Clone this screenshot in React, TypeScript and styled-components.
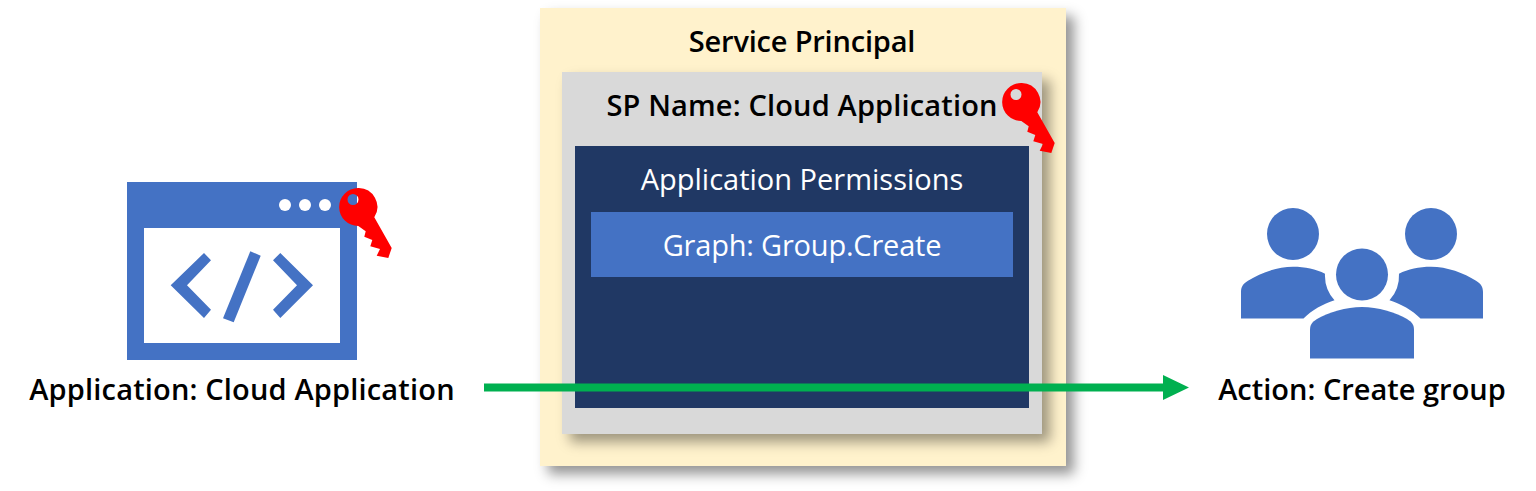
import React from "react";
import styled, { createGlobalStyle } from "styled-components";

const Global = createGlobalStyle`
  html, body { margin: 0; padding: 0; background: #fff; }
`;

const Page = styled.div`
  position: relative;
  width: 1536px;
  height: 491px;
  overflow: hidden;
  display: flex;
  align-items: flex-start;
  padding-top: 8px;
  box-sizing: border-box;
  font-family: "Open Sans", "Noto Sans", sans-serif;
  color: #000;
`;

const SideColumn = styled.div<{ $left: number; $top: number; $width: number }>`
  margin-left: ${(p) => p.$left}px;
  margin-top: ${(p) => p.$top}px;
  width: ${(p) => p.$width}px;
  flex: none;
  display: flex;
  flex-direction: column;
  align-items: center;
`;

const SideLabel = styled.div<{ $tracking: number }>`
  font-size: 29px;
  font-weight: 600;
  line-height: 36px;
  white-space: nowrap;
  letter-spacing: ${(p) => p.$tracking}px;
`;

const IconWrap = styled.div<{ $height: number }>`
  height: ${(p) => p.$height}px;
  margin-bottom: 11px;
`;

const Panel = styled.div<{ $bg: string; $pad: string; $width: number; $height: number }>`
  position: relative;
  flex: none;
  box-sizing: border-box;
  width: ${(p) => p.$width}px;
  height: ${(p) => p.$height}px;
  padding: ${(p) => p.$pad};
  background: ${(p) => p.$bg};
  display: flex;
  flex-direction: column;
  align-items: stretch;
`;

const OuterPanel = styled(Panel)`
  margin-left: 86px;
  box-shadow: 8px 8px 12px rgba(0, 0, 0, 0.42);
`;

const MiddlePanel = styled(Panel)`
  box-shadow: 8px 8px 12px rgba(0, 0, 0, 0.38);
`;

const Title = styled.div<{ $height: number; $tracking: number; $drop: number }>`
  height: ${(p) => p.$height}px;
  box-sizing: border-box;
  padding-bottom: ${(p) => p.$drop}px;
  display: flex;
  align-items: center;
  justify-content: center;
  flex: none;
  font-size: 29px;
  font-weight: 600;
  letter-spacing: ${(p) => p.$tracking}px;
  white-space: nowrap;
`;

const PermissionsTitle = styled.div`
  height: 66px;
  box-sizing: border-box;
  padding-bottom: 2px;
  flex: none;
  display: flex;
  align-items: center;
  justify-content: center;
  color: #fff;
  font-size: 29px;
  font-weight: 400;
  white-space: nowrap;
`;

const PermissionBar = styled.div`
  height: 65px;
  flex: none;
  background: #4472c4;
  color: #fff;
  display: flex;
  align-items: center;
  justify-content: center;
  font-size: 29px;
  letter-spacing: -0.2px;
  white-space: nowrap;
`;

const KeySvg = styled.svg<{ $left: number; $top: number }>`
  position: absolute;
  left: ${(p) => p.$left}px;
  top: ${(p) => p.$top}px;
  width: 54px;
  height: 71px;
`;

const ArrowSvg = styled.svg`
  position: absolute;
  left: 484px;
  top: 375px;
  width: 705px;
  height: 25px;
`;

const Key = ({ left, top }: { left: number; top: number }) => (
  <KeySvg $left={left} $top={top} viewBox="0 0 54 71">
    <path
      fillRule="evenodd"
      fill="#f00"
      d="M19 0A19 19 0 0 1 35.300 29.300L52.700 60L49.300 70L37.700 67.700L41 61L31.300 58.300L33.300 52L25.300 48.700L26.700 43.300L19.300 38A19 19 0 0 1 19 0ZM14 6A5.500 5.500 0 1 0 14 17A5.500 5.500 0 1 0 14 6Z"
    />
  </KeySvg>
);

const WindowIcon = () => (
  <svg width="230" height="178" viewBox="0 0 230 178" style={{ display: "block" }}>
    <path fill="#4472c4" fillRule="evenodd" d="M0 0H230V178H0ZM17 46V161H213V46Z" />
    <circle cx="158" cy="23" r="6" fill="#fff" />
    <circle cx="178" cy="23" r="6" fill="#fff" />
    <circle cx="198" cy="23" r="6" fill="#fff" />
    <path fill="#4472c4" d="M77 71L84 78.300L60 103.300L84 127.700L77 136L43.700 103.300Z" />
    <path fill="#4472c4" d="M153.300 71L146 78.300L170 103.300L146 127.700L153.300 136L186 103.300Z" />
    <path fill="#4472c4" d="M123.300 69.300L133.700 73.700L106.700 140.300L96 136.300Z" />
  </svg>
);

const GroupIcon = () => (
  <svg width="242" height="152" viewBox="0 0 242 152" style={{ display: "block" }}>
    <g fill="#4472c4">
      <circle cx="52" cy="26" r="26" />
      <circle cx="190" cy="26" r="26" />
      <circle cx="121" cy="66.500" r="26" />
      <path d="M0 110.500V84C0 78 3 75 7 72.700C19 65 36 58.700 52 58.700C64 58.700 75 61 84 65.700A37 37 0 0 0 93.500 92.300C82 96 71 102 62.500 110.500Z" />
      <path d="M242 110.500V84C242 78 239 75 235 72.700C223 65 206 58.700 190 58.700C178 58.700 167 61 158 65.700A37 37 0 0 1 148.500 92.300C160 96 171 102 179.500 110.500Z" />
      <path d="M69 150.500V122C69 117 71 114 76 111C88 104 105 99 121 99C137 99 154 104 166 111C171 114 173 117 173 122V150.500Z" />
    </g>
  </svg>
);

export default function App() {
  return (
    <Page>
      <Global />
      <SideColumn $left={30} $top={174} $width={424}>
        <IconWrap $height={178}>
          <WindowIcon />
        </IconWrap>
        <SideLabel $tracking={0.17}>Application: Cloud Application</SideLabel>
      </SideColumn>

      <OuterPanel $bg="#fff2cc" $pad="0 24px 32px 22px" $width={526} $height={458}>
        <Title $height={64} $tracking={-0.2} $drop={0}>Service Principal</Title>
        <MiddlePanel $bg="#d9d9d9" $pad="0 13px 26px 13px" $width={480} $height={362}>
          <Title $height={74} $tracking={0.15} $drop={10}>SP Name: Cloud Application</Title>
          <Panel $bg="#203864" $pad="0 16px" $width={454} $height={262}>
            <PermissionsTitle>Application Permissions</PermissionsTitle>
            <PermissionBar>Graph: Group.Create</PermissionBar>
          </Panel>
        </MiddlePanel>
      </OuterPanel>

      <SideColumn $left={152} $top={200} $width={288}>
        <IconWrap $height={152}>
          <GroupIcon />
        </IconWrap>
        <SideLabel $tracking={0}>Action: Create group</SideLabel>
      </SideColumn>

      <ArrowSvg viewBox="0 0 705 25">
        <path fill="#00b050" d="M0 8.500H679V0L705 12.500L679 25V16.500H0Z" />
      </ArrowSvg>
      <Key left={339} top={188} />
      <Key left={1002} top={83} />
    </Page>
  );
}
